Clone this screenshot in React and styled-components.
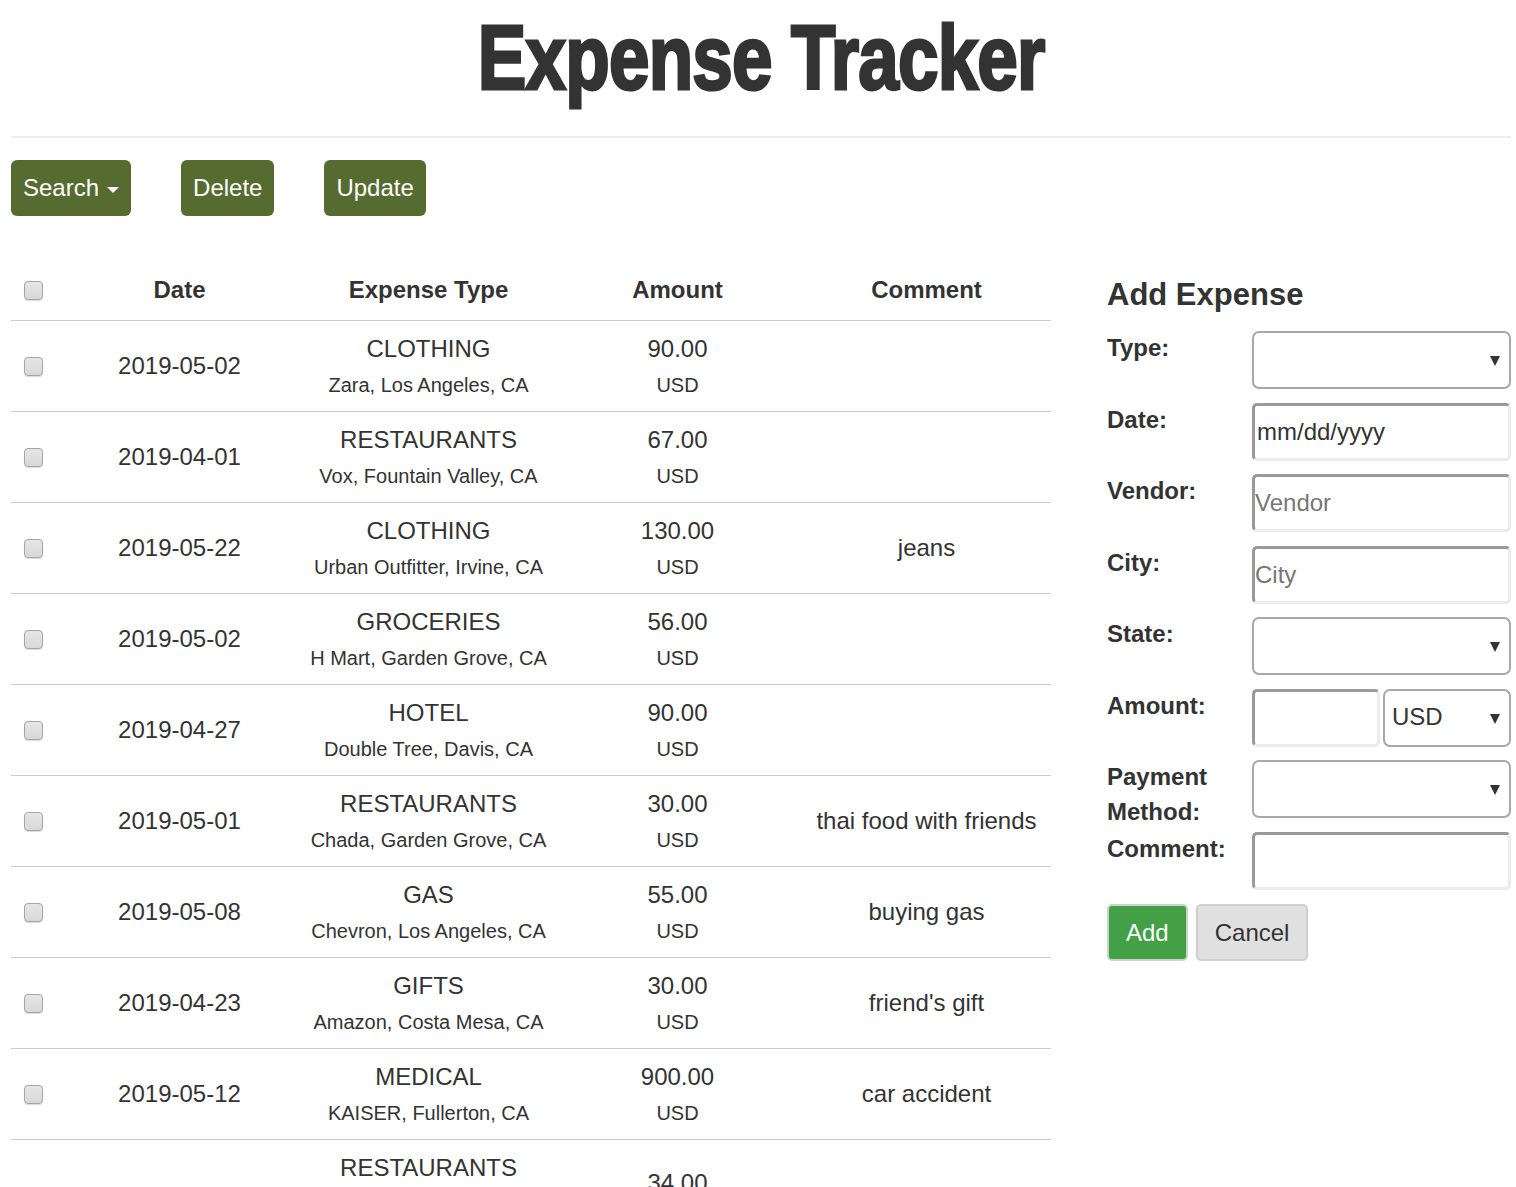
import React from "react";
import styled, { createGlobalStyle } from "styled-components";

const GlobalStyle = createGlobalStyle`
  body {
    margin: 0;
    background: #fff;
    color: #333;
    font-family: "Liberation Sans", Arial, sans-serif;
    font-size: 24px;
    line-height: 1.428571;
  }
  * { box-sizing: border-box; }
`;

const Page = styled.div`
  width: 1500px;
  margin-left: 11px;
`;

const Header = styled.div`
  height: 136px;
  padding-top: 12px;
  text-align: center;
`;

const Title = styled.h1`
  display: inline-block;
  margin: 0;
  font-family: "Liberation Sans", Arial, sans-serif;
  font-weight: 700;
  font-size: 91px;
  line-height: 91px;
  letter-spacing: -1px;
  color: #333;
  -webkit-text-stroke: 3px #333;
  transform: scaleX(0.8);
`;

const Rule = styled.hr`
  margin: 0;
  border: 0;
  border-top: 2px solid #eee;
`;

const Toolbar = styled.div`
  display: flex;
  gap: 50px;
  margin-top: 22px;
`;

const OliveButton = styled.button`
  display: inline-flex;
  align-items: center;
  gap: 8px;
  height: 56px;
  padding: 0 12px;
  border: 0;
  border-radius: 6px;
  background: #556b2f;
  color: #fff;
  font-family: "Liberation Sans", Arial, sans-serif;
  font-size: 24px;
  line-height: 34px;
`;

const Caret = styled.span`
  width: 0;
  height: 0;
  margin-top: 3px;
  border-left: 6px solid transparent;
  border-right: 6px solid transparent;
  border-top: 6px solid #fff;
`;

const Main = styled.div`
  display: flex;
  justify-content: space-between;
  margin-top: 46px;
`;

const Table = styled.table`
  width: 1040px;
  border-collapse: collapse;
  table-layout: fixed;
`;

const Th = styled.th`
  width: ${(p) => p.$w || "249px"};
  padding: 11px 0 13px;
  font-weight: 700;
  text-align: center;
  line-height: 34px;
  border-bottom: 1px solid #ccc;
`;

const Td = styled.td`
  padding: 11px 6px;
  text-align: center;
  vertical-align: middle;
  line-height: 34px;
  border-bottom: 1px solid #ccc;
`;

const CheckCell = styled(Td)`
  padding: 0 0 0 13px;
  text-align: left;
`;

const Check = styled.span`
  display: block;
  width: 19px;
  height: 19px;
  border: 1px solid #a5a5a5;
  border-radius: 4px;
  background: linear-gradient(#e6e6e6, #d8d8d8);
  box-shadow: 0 1px 1px rgba(0, 0, 0, 0.15);
`;

const Sub = styled.div`
  margin-top: 5px;
  font-size: 20px;
  line-height: 29px;
`;

const Panel = styled.div`
  width: 404px;
`;

const PanelTitle = styled.h3`
  margin: 16px 0 19px;
  font-size: 31px;
  line-height: 34px;
  font-weight: 700;
`;

const Form = styled.div`
  display: grid;
  grid-template-columns: 145px 259px;
  align-items: start;
`;

const Label = styled.label`
  font-weight: 700;
  line-height: 35px;
  margin-top: -1px;
`;

const Field = styled.div`
  position: relative;
  display: flex;
  gap: 3px;
  height: 58px;
  margin-bottom: 13.5px;
`;

const TextInput = styled.input`
  width: ${(p) => p.$w || "100%"};
  height: 58px;
  padding: 0 ${(p) => (p.$flush ? "0" : "2px")};
  border: 3px solid;
  border-color: #9a9a9a #ececec #ececec #9a9a9a;
  border-radius: 5px;
  font-family: "Liberation Sans", Arial, sans-serif;
  font-size: 24px;
  color: #333;
  outline: none;
  &::placeholder { color: #777; }
`;

const SelectBox = styled.div`
  position: relative;
  flex: 1;
  height: 58px;
  border: 2px solid #a8a8a8;
  border-radius: 7px;
  display: flex;
  align-items: center;
  padding-left: 7px;
  font-size: 24px;
`;

const Arrow = styled.span`
  position: absolute;
  right: 9px;
  top: 50%;
  margin-top: -4px;
  width: 0;
  height: 0;
  border-left: 5px solid transparent;
  border-right: 5px solid transparent;
  border-top: 10px solid #333;
`;

const Actions = styled.div`
  display: flex;
  gap: 8px;
  margin-top: 1px;
`;

const FormButton = styled.button`
  height: 57px;
  padding: 0 17px;
  border: 2px solid ${(p) => (p.$primary ? "#c8d6c8" : "#cfcfcf")};
  border-radius: 5px;
  background: ${(p) => (p.$primary ? "#43a047" : "#e0e0e0")};
  color: ${(p) => (p.$primary ? "#fff" : "#333")};
  font-family: "Liberation Sans", Arial, sans-serif;
  font-size: 24px;
`;

const expenses = [
  { date: "2019-05-02", type: "CLOTHING", vendor: "Zara, Los Angeles, CA", amount: "90.00", comment: "" },
  { date: "2019-04-01", type: "RESTAURANTS", vendor: "Vox, Fountain Valley, CA", amount: "67.00", comment: "" },
  { date: "2019-05-22", type: "CLOTHING", vendor: "Urban Outfitter, Irvine, CA", amount: "130.00", comment: "jeans" },
  { date: "2019-05-02", type: "GROCERIES", vendor: "H Mart, Garden Grove, CA", amount: "56.00", comment: "" },
  { date: "2019-04-27", type: "HOTEL", vendor: "Double Tree, Davis, CA", amount: "90.00", comment: "" },
  { date: "2019-05-01", type: "RESTAURANTS", vendor: "Chada, Garden Grove, CA", amount: "30.00", comment: "thai food with friends" },
  { date: "2019-05-08", type: "GAS", vendor: "Chevron, Los Angeles, CA", amount: "55.00", comment: "buying gas" },
  { date: "2019-04-23", type: "GIFTS", vendor: "Amazon, Costa Mesa, CA", amount: "30.00", comment: "friend's gift" },
  { date: "2019-05-12", type: "MEDICAL", vendor: "KAISER, Fullerton, CA", amount: "900.00", comment: "car accident" },
  { date: "2019-05-03", type: "RESTAURANTS", vendor: "Boiling Point Restaurant, Garden Grove, CA", amount: "34.00", comment: "" },
];

const Select = ({ value }) => (
  <SelectBox>
    {value}
    <Arrow />
  </SelectBox>
);

export default function App() {
  return (
    <Page>
      <GlobalStyle />
      <Header>
        <Title>Expense Tracker</Title>
      </Header>
      <Rule />
      <Toolbar>
        <OliveButton>
          Search <Caret />
        </OliveButton>
        <OliveButton>Delete</OliveButton>
        <OliveButton>Update</OliveButton>
      </Toolbar>
      <Main>
        <Table>
          <thead>
            <tr>
              <Th $w="44px" style={{ textAlign: "left", paddingLeft: 13 }}>
                <Check />
              </Th>
              <Th>Date</Th>
              <Th>Expense Type</Th>
              <Th>Amount</Th>
              <Th>Comment</Th>
            </tr>
          </thead>
          <tbody>
            {expenses.map((e, i) => (
              <tr key={i}>
                <CheckCell>
                  <Check />
                </CheckCell>
                <Td>{e.date}</Td>
                <Td>
                  {e.type}
                  <Sub>{e.vendor}</Sub>
                </Td>
                <Td>
                  {e.amount}
                  <Sub>USD</Sub>
                </Td>
                <Td>{e.comment}</Td>
              </tr>
            ))}
          </tbody>
        </Table>
        <Panel>
          <PanelTitle>Add Expense</PanelTitle>
          <Form>
            <Label>Type:</Label>
            <Field>
              <Select />
            </Field>
            <Label>Date:</Label>
            <Field>
              <TextInput readOnly value="mm/dd/yyyy" />
            </Field>
            <Label>Vendor:</Label>
            <Field>
              <TextInput placeholder="Vendor" $flush />
            </Field>
            <Label>City:</Label>
            <Field>
              <TextInput placeholder="City" $flush />
            </Field>
            <Label>State:</Label>
            <Field>
              <Select />
            </Field>
            <Label>Amount:</Label>
            <Field>
              <TextInput $w="128px" />
              <Select value="USD" />
            </Field>
            <Label>
              Payment
              <br />
              Method:
            </Label>
            <Field>
              <Select />
            </Field>
            <Label>Comment:</Label>
            <Field>
              <TextInput />
            </Field>
          </Form>
          <Actions>
            <FormButton $primary>Add</FormButton>
            <FormButton>Cancel</FormButton>
          </Actions>
        </Panel>
      </Main>
    </Page>
  );
}
